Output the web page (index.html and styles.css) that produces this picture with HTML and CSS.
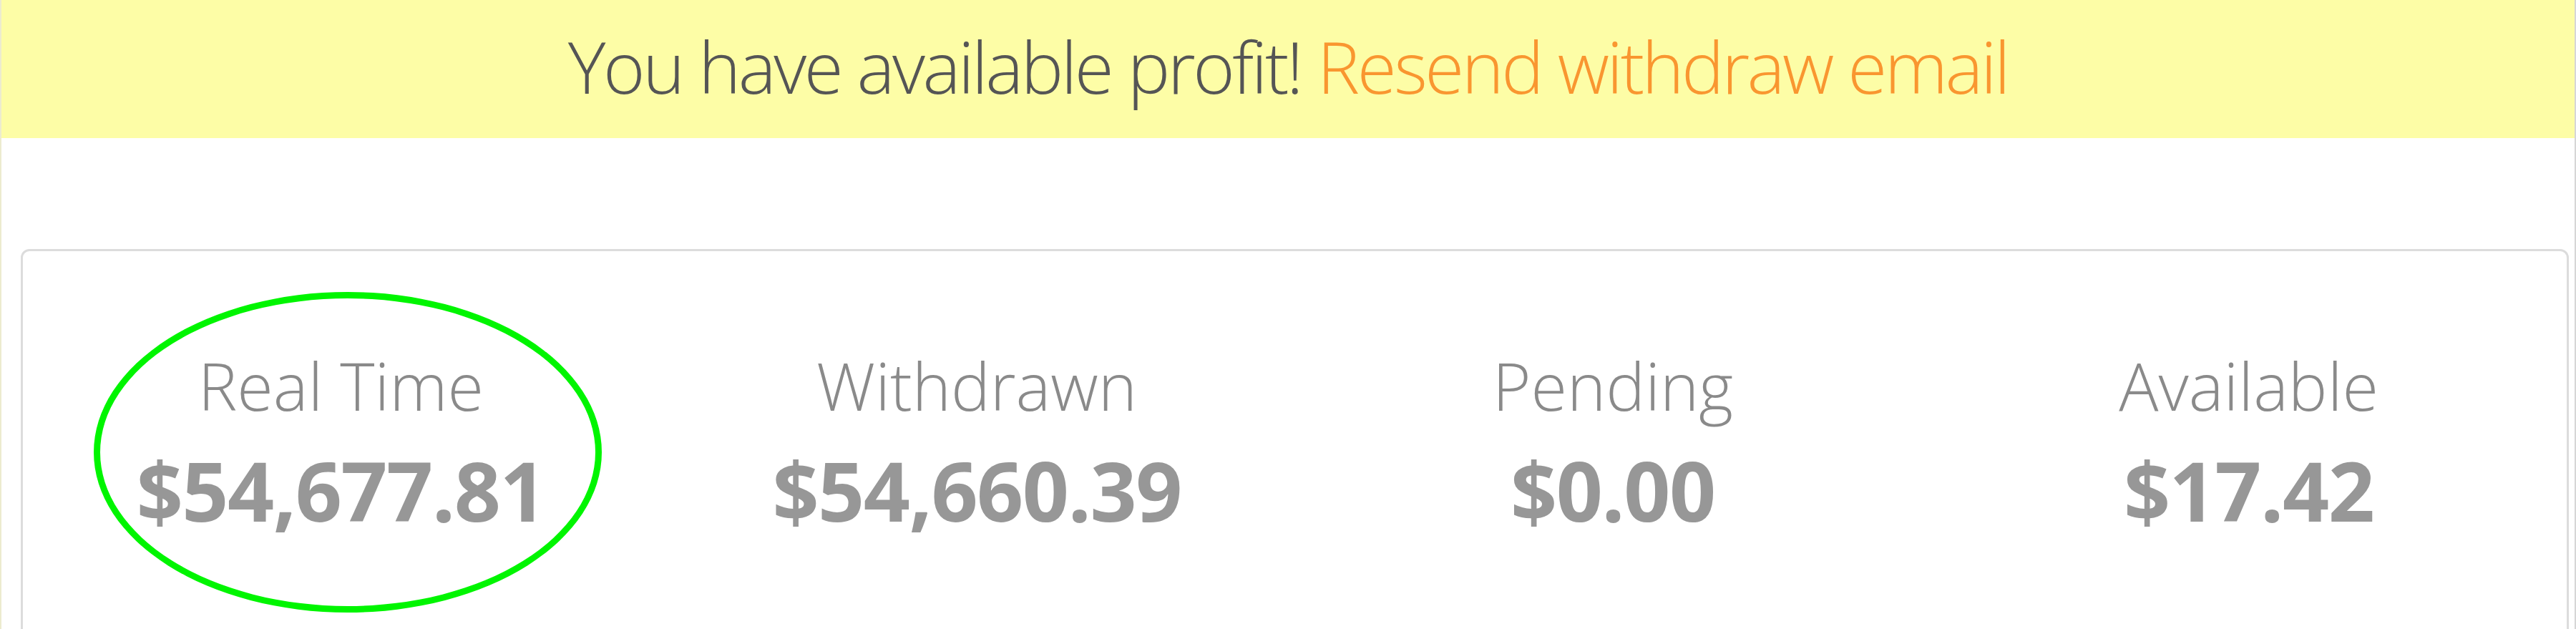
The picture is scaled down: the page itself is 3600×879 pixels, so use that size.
FILE: index.html
```html
<!DOCTYPE html>
<html lang="en">
<head>
<meta charset="utf-8">
<title>Profit</title>
<link rel="stylesheet" href="styles.css">
</head>
<body>
<div class="page">
  <div class="banner">You have available profit! <a class="resend" href="#">Resend withdraw email</a></div>
  <div class="card">
    <div class="stat highlighted">
      <div class="label">Real Time</div>
      <div class="value">$54,677.81</div>
      <div class="ring"></div>
    </div>
    <div class="stat">
      <div class="label">Withdrawn</div>
      <div class="value">$54,660.39</div>
    </div>
    <div class="stat">
      <div class="label">Pending</div>
      <div class="value">$0.00</div>
    </div>
    <div class="stat">
      <div class="label">Available</div>
      <div class="value">$17.42</div>
    </div>
  </div>
</div>
</body>
</html>
```
FILE: styles.css
```css
html, body {
  margin: 0;
  padding: 0;
  background: #ffffff;
}
body {
  font-family: "Open Sans", "Liberation Sans", sans-serif;
  overflow: hidden;
}
.page {
  height: 879px;
  border-left: 2px solid #ecebcf;
  border-right: 2px solid #d6d6d6;
  overflow: hidden;
}
.banner {
  height: 185px;
  padding-bottom: 8px;
  line-height: 185px;
  background: #fdfda6;
  text-align: center;
  font-size: 100px;
  font-weight: 300;
  letter-spacing: -3.5px;
  color: #555555;
  white-space: nowrap;
}
.resend {
  color: #f99630;
  text-decoration: none;
}
.card {
  margin: 155px 8px 0 27px;
  border: 3px solid #dcdcdc;
  border-radius: 12px;
  padding-top: 133px;
  min-height: 700px;
  display: grid;
  grid-template-columns: repeat(4, 1fr);
}
.stat {
  position: relative;
  text-align: center;
  white-space: nowrap;
}
.label {
  font-size: 92px;
  font-weight: 300;
  line-height: 1.2;
  color: #8a8a8a;
}
.value {
  margin-top: 23px;
  font-size: 114px;
  font-weight: 700;
  line-height: 1.2;
  color: #979797;
  letter-spacing: -1.5px;
}
.ring {
  position: absolute;
  left: 99px;
  top: -76px;
  width: 692px;
  height: 430px;
  border: 9px solid #00f500;
  border-radius: 50%;
  pointer-events: none;
}
```
